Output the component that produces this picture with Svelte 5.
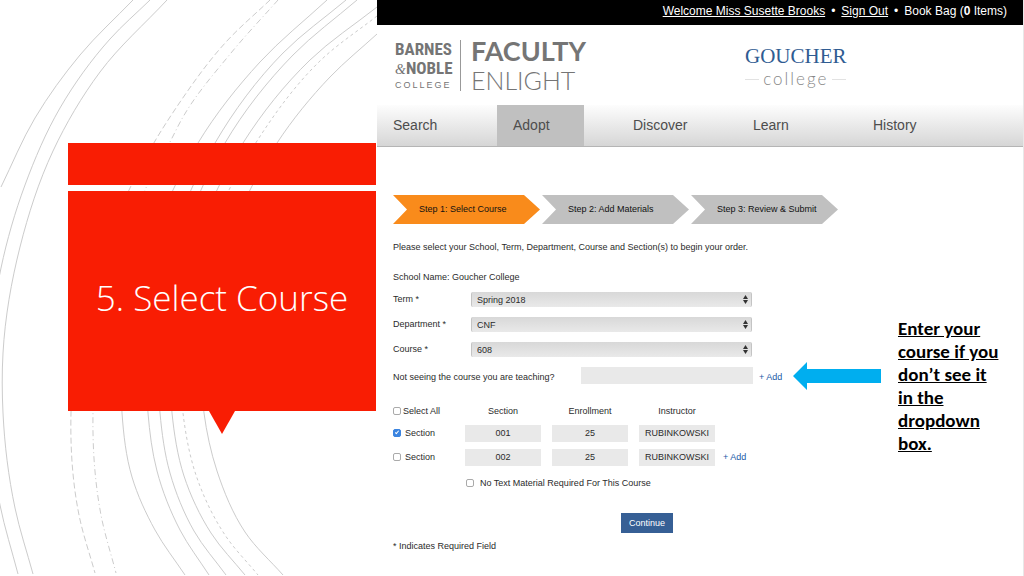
<script lang="ts">
  type Point = [number, number]

  interface Arc {
    points: Point[]
    dash?: string
  }

  const arcs: Arc[] = [
    { points: [[133, 0], [80, 55], [35, 118], [1, 187]] },
    { points: [[150, 0], [110, 39], [60, 108], [25, 185], [1, 268], [-12, 390], [0, 505], [18, 574]] },
    { points: [[167, 0], [100, 72], [53, 151], [20, 247], [3, 353], [3, 413], [15, 508], [33, 574]] },
    { points: [[270, 0], [226, 42], [176, 108], [155, 141], [130, 188], [71, 413], [79, 515], [95, 573]], dash: '6 3' },
    { points: [[278, 0], [231, 53], [183, 117], [170, 142], [145, 190], [93, 413], [101, 515], [116, 573]], dash: '6 3 1 3' },
    { points: [[327, 0], [260, 62], [198, 143], [173, 190], [122, 413], [132, 477], [155, 530], [185, 575]] },
    { points: [[346, 0], [283, 53], [215, 143], [191, 190], [148, 413], [157, 471], [180, 530], [209, 575]] },
    { points: [[357, 0], [293, 55], [225, 143], [201, 190], [160, 413], [170, 473], [194, 531], [226, 575]] },
    { points: [[377, 7], [310, 60], [243, 143], [217, 190], [172, 413], [184, 476], [211, 533], [245, 575]] },
    { points: [[377, 16], [321, 60], [257, 141], [229, 190], [183, 413], [197, 478], [225, 535], [258, 575]], dash: '3 3' },
    { points: [[377, 34], [330, 77], [277, 143], [250, 190], [204, 413], [217, 471], [245, 532], [283, 575]] },
  ]

  // Smooth curve through the points, the nearer neighbour weighs more in each tangent
  function smooth(points: Point[]): string {
    const chords = points.slice(1).map(([x, y], i) => {
      const dx = x - points[i][0]
      const dy = y - points[i][1]
      const length = Math.hypot(dx, dy)
      return { x: dx / length, y: dy / length, length }
    })
    const tangents = points.map((_, i) => {
      const a = chords[i - 1] ?? chords[i]
      const b = chords[i] ?? a
      const total = a.length + b.length
      return [(a.x * b.length + b.x * a.length) / total, (a.y * b.length + b.y * a.length) / total]
    })

    let d = `M${points[0].join(' ')}`
    chords.forEach(({ length }, i) => {
      const [x1, y1] = points[i]
      const [x2, y2] = points[i + 1]
      const k = length / 3
      d += `C${x1 + tangents[i][0] * k} ${y1 + tangents[i][1] * k}`
      d += ` ${x2 - tangents[i + 1][0] * k} ${y2 - tangents[i + 1][1] * k} ${x2} ${y2}`
    })
    return d
  }

  const navItems = ['Search', 'Adopt', 'Discover', 'Learn', 'History']
  const steps = ['Step 1: Select Course', 'Step 2: Add Materials', 'Step 3: Review & Submit']

  const fields = [
    { id: 'term', label: 'Term *', value: 'Spring 2018' },
    { id: 'department', label: 'Department *', value: 'CNF' },
    { id: 'course', label: 'Course *', value: '608' },
  ]

  let newCourse = $state('')
  let noText = $state(false)
  let sections = $state([
    { number: '001', enrollment: '25', instructor: 'RUBINKOWSKI', checked: true },
    { number: '002', enrollment: '25', instructor: 'RUBINKOWSKI', checked: false },
  ])
  let allSelected = $derived(sections.every((s) => s.checked))

  function toggleAll() {
    const next = !allSelected
    for (const s of sections) s.checked = next
  }
</script>

<div class="slide">
  <aside>
    <svg class="arcs" aria-hidden="true">
      {#each arcs as arc}
        <path d={smooth(arc.points)} stroke-dasharray={arc.dash} />
      {/each}
    </svg>
    <div class="strip"></div>
    <div class="card"><h1>5. Select Course</h1></div>
    <div class="pointer"></div>
  </aside>

  <div class="site">
    <div class="topbar">
      <a href="#account">Welcome Miss Susette Brooks</a>
      <span>•</span>
      <a href="#signout">Sign Out</a>
      <span>•</span>
      <span>Book Bag (<b>0</b> Items)</span>
    </div>

    <header>
      <div class="brand">
        <div class="bn">
          <span class="bn-name">BARNES</span>
          <span class="bn-name"><i>&amp;</i>NOBLE</span>
          <span class="bn-college">COLLEGE</span>
        </div>
        <div class="faculty">
          <b>FACULTY</b>
          <span>ENLIGHT</span>
        </div>
      </div>
      <div class="school">
        <span class="goucher">GOUCHER</span>
        <span class="college">college</span>
      </div>
    </header>

    <nav>
      {#each navItems as item}
        <div class="nav-item">
          <a href="#{item.toLowerCase()}" class:active={item === 'Adopt'}>{item}</a>
        </div>
      {/each}
    </nav>

    <main>
      <ol class="steps">
        {#each steps as step, i}
          <li class:current={i === 0}>{step}</li>
        {/each}
      </ol>

      <p class="intro">Please select your School, Term, Department, Course and Section(s) to begin your order.</p>
      <p class="school-name">School Name: Goucher College</p>

      <div class="columns">
        <form onsubmit={(e) => e.preventDefault()}>
          {#each fields as field}
            <div class="field">
              <label for={field.id}>{field.label}</label>
              <div class="select">
                <select id={field.id}>
                  <option>{field.value}</option>
                </select>
                <svg viewBox="0 0 5 9" aria-hidden="true">
                  <path d="M0 4 2.5 0 5 4zM0 5h5L2.5 9z" />
                </svg>
              </div>
            </div>
          {/each}

          <div class="missing">
            <label for="new-course">Not seeing the course you are teaching?</label>
            <input id="new-course" type="text" bind:value={newCourse} />
            <button type="button" class="add">+ Add</button>
          </div>

          <table>
            <thead>
              <tr>
                <th class="pick">
                  <label class="all">
                    <input type="checkbox" checked={allSelected} onchange={toggleAll} />Select All
                  </label>
                </th>
                <th>Section</th>
                <th>Enrollment</th>
                <th class="instructor">Instructor</th>
                <th class="more"></th>
              </tr>
            </thead>
            <tbody>
              {#each sections as section, i}
                <tr>
                  <td class="pick">
                    <label><input type="checkbox" bind:checked={section.checked} />Section</label>
                  </td>
                  <td><input type="text" aria-label="Section" bind:value={section.number} /></td>
                  <td><input type="text" aria-label="Enrollment" bind:value={section.enrollment} /></td>
                  <td class="instructor">
                    <input type="text" aria-label="Instructor" bind:value={section.instructor} />
                  </td>
                  <td class="more">
                    {#if i === sections.length - 1}
                      <button type="button" class="add">+ Add</button>
                    {/if}
                  </td>
                </tr>
              {/each}
            </tbody>
          </table>

          <label class="no-text">
            <input type="checkbox" bind:checked={noText} />No Text Material Required For This Course
          </label>

          <button class="continue">Continue</button>
          <p class="required">* Indicates Required Field</p>
        </form>

        <div class="callout">
          <svg viewBox="0 0 88 28" aria-hidden="true">
            <path d="M0 14 14 0v7h74v14H14v7z" />
          </svg>
          <p>Enter your course if you don’t see it in the dropdown box.</p>
        </div>
      </div>
    </main>
  </div>
</div>

<style>
  :global(body) {
    margin: 0;
    background: #fff;
  }
  .slide {
    display: grid;
    grid-template-columns: 377fr 647fr;
    min-height: 100vh;
    font-family: 'Liberation Sans', Arial, sans-serif;
    font-size: 9px;
    line-height: 12px;
    color: #2b2b2b;
  }
  p,
  h1,
  ol {
    margin: 0;
    padding: 0;
  }

  aside {
    position: relative;
    padding: 143px 1px 0 68px;
  }
  .arcs {
    position: absolute;
    inset: 0;
    width: 100%;
    height: 100%;
  }
  .arcs path {
    fill: none;
    stroke: #ccc;
    stroke-width: 1;
  }
  .strip,
  .card,
  .pointer {
    position: relative;
    background: #f91d03;
  }
  .strip {
    height: 42px;
    margin-bottom: 6px;
  }
  .card {
    display: flex;
    align-items: center;
    justify-content: center;
    box-sizing: border-box;
    height: 220px;
    padding-bottom: 6px;
  }
  h1 {
    font-family: 'Open Sans', 'Segoe UI', sans-serif;
    font-size: 35px;
    font-weight: 300;
    line-height: 44px;
    color: #fff;
    white-space: nowrap;
  }
  .pointer {
    width: 26px;
    height: 23px;
    margin: 0 auto;
    clip-path: polygon(0 0, 100% 0, 50% 100%);
  }

  .site {
    border-right: 1px solid #e8e8e8;
    background: #fff;
  }
  .topbar {
    display: flex;
    justify-content: flex-end;
    gap: 6px;
    padding: 3px 16px 6px;
    background: #000;
    font-size: 12px;
    line-height: 16px;
    color: #fff;
  }
  .topbar a {
    color: #fff;
  }

  header {
    display: flex;
    align-items: flex-start;
    box-sizing: border-box;
    height: 80px;
    padding: 13px 16px 0 18px;
    color: #757575;
  }
  .brand {
    display: flex;
    align-items: flex-start;
    flex: 0 0 350px;
  }
  .bn {
    display: flex;
    flex-direction: column;
    width: 55px;
    padding-right: 10px;
    border-right: 1px solid #999;
    margin: 2px 10px 0 0;
    white-space: nowrap;
  }
  .bn-name {
    font-family: 'Roboto Condensed', 'Open Sans Condensed', Carlito, Calibri, sans-serif;
    font-size: 17px;
    font-weight: 700;
    line-height: 19px;
  }
  .bn-name i {
    font-family: 'Liberation Serif', serif;
    font-size: 14px;
    font-weight: 400;
  }
  .bn-college {
    font-size: 9px;
    line-height: 12px;
    letter-spacing: 2px;
  }
  .faculty {
    display: flex;
    flex-direction: column;
    font-family: Lato, sans-serif;
    font-size: 27px;
    line-height: 26px;
  }
  .faculty b {
    font-weight: 700;
  }
  .faculty span {
    margin-top: 3px;
    font-size: 25px;
    font-weight: 300;
  }
  .school {
    display: flex;
    flex-direction: column;
    align-items: center;
    padding-top: 6px;
  }
  .goucher {
    font-family: 'Liberation Serif', serif;
    font-size: 21px;
    line-height: 24px;
    color: #2f5c92;
  }
  .college {
    display: flex;
    align-items: center;
    gap: 4px;
    font-family: Lato, sans-serif;
    font-size: 17px;
    font-weight: 300;
    line-height: 22px;
    letter-spacing: 2px;
    color: #888;
  }
  .college::before,
  .college::after {
    content: '';
    width: 14px;
    height: 1px;
    background: #e2e2e2;
  }

  nav {
    display: flex;
    height: 41px;
    border-bottom: 1px solid #b5b5b5;
    background: linear-gradient(#fdfdfd, #d6d6d6);
  }
  .nav-item {
    display: flex;
    flex: 0 0 120px;
  }
  nav a {
    padding: 0 34px 0 16px;
    font-size: 14px;
    line-height: 40px;
    color: #4d4d4d;
    text-decoration: none;
  }
  nav a.active {
    background: #c0c0c0;
  }

  main {
    padding: 48px 16px 16px;
  }
  .steps {
    display: flex;
    gap: 2px;
    list-style: none;
  }
  .steps li {
    box-sizing: border-box;
    width: 147px;
    padding-left: 26px;
    line-height: 29px;
    background: #c0c0c0;
    color: #111;
    clip-path: polygon(0 0, 131px 0, 100% 50%, 131px 100%, 0 100%, 14px 50%);
  }
  .steps li.current {
    background: #f98b1b;
  }
  .intro {
    margin-top: 17px;
  }
  .school-name {
    margin-top: 18px;
  }

  .columns {
    display: flex;
    align-items: flex-start;
    padding-top: 9px;
  }
  form {
    flex: 0 0 400px;
  }
  .field {
    display: flex;
    height: 25px;
  }
  .field label {
    width: 78px;
    padding-top: 1px;
  }
  .select {
    position: relative;
    width: 281px;
  }
  select {
    display: block;
    box-sizing: border-box;
    width: 100%;
    height: 15px;
    padding: 0 5px;
    border: 0;
    border-left: 1px solid #c4c4c4;
    border-right: 1px solid #c4c4c4;
    border-radius: 2px;
    background: linear-gradient(#d8d8d8, #e9e9e9);
    appearance: none;
    font: inherit;
    color: #2b2b2b;
  }
  .select svg {
    position: absolute;
    top: 3px;
    right: 4px;
    width: 5px;
    height: 9px;
    fill: #333;
    pointer-events: none;
  }

  .missing {
    display: flex;
    align-items: center;
  }
  .missing label {
    width: 188px;
  }
  input[type='text'] {
    box-sizing: border-box;
    height: 17px;
    padding: 0;
    border: 0;
    background: #e9e9e9;
    font: inherit;
    color: #2b2b2b;
  }
  .missing input {
    width: 172px;
  }
  .missing label,
  .missing .add {
    padding-top: 3px;
  }
  .add {
    padding: 0;
    border: 0;
    background: none;
    font: inherit;
    color: #1a5ba8;
    cursor: pointer;
  }
  .missing .add {
    margin-left: 6px;
  }

  table {
    margin-top: 18px;
    border-spacing: 0;
  }
  th,
  td {
    height: 24px;
    padding: 0 11px 0 0;
    font-weight: 400;
    vertical-align: middle;
  }
  thead th {
    height: 17px;
    padding-bottom: 2px;
  }
  td input[type='text'] {
    display: block;
    width: 76px;
    text-align: center;
  }
  .pick {
    width: 72px;
    padding-right: 0;
    text-align: left;
  }
  .instructor {
    padding-right: 8px;
  }
  .pick label,
  .no-text {
    display: flex;
    align-items: center;
    gap: 4px;
  }
  .pick .all {
    gap: 2px;
  }
  td.more {
    padding: 0;
  }
  input[type='checkbox'] {
    width: 8px;
    height: 8px;
    margin: 0;
    border: 1px solid #aaa;
    border-radius: 2px;
    background: #fff;
    appearance: none;
    box-sizing: border-box;
  }
  input[type='checkbox']:checked {
    border-color: #3b84e0;
    background: #3b84e0;
    position: relative;
  }
  input[type='checkbox']:checked::after {
    content: '';
    position: absolute;
    left: 2px;
    top: 0;
    width: 1px;
    height: 3px;
    border: solid #fff;
    border-width: 0 1px 1px 0;
    transform: rotate(40deg);
  }
  .no-text {
    margin: 8px 0 0 73px;
    gap: 6px;
  }
  .continue {
    display: block;
    width: 52px;
    height: 20px;
    margin: 24px 0 0 228px;
    padding: 0;
    border: 0;
    background: #365f95;
    font: inherit;
    color: #fff;
  }
  .required {
    margin-top: 7px;
  }

  .callout {
    display: flex;
    align-items: flex-start;
    padding-top: 25px;
  }
  .callout svg {
    flex: none;
    width: 88px;
    height: 28px;
    margin-top: 45px;
    fill: #00aeef;
  }
  .callout p {
    width: 104px;
    margin-left: 17px;
    font-family: Carlito, Calibri, Lato, sans-serif;
    font-size: 19px;
    font-weight: 700;
    line-height: 23px;
    color: #000;
    text-decoration: underline;
  }
</style>
